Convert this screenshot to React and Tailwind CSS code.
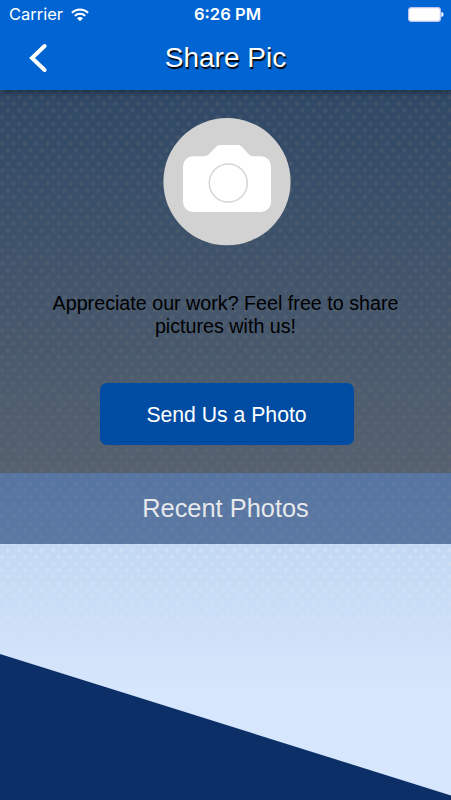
import React from 'react';

function WifiIcon() {
  return (
    <svg width="18" height="14" viewBox="0 0 18 14" fill="none" stroke="#fff" strokeWidth="2">
      <path d="M0.9 4.9 A11.4 11.4 0 0 1 17.1 4.9" />
      <path d="M3.8 7.9 A7.3 7.3 0 0 1 14.2 7.9" />
      <path d="M9 13.2 L6 10.3 A4.2 4.2 0 0 1 12 10.3 Z" fill="#fff" stroke="none" />
    </svg>
  );
}

function BatteryIcon() {
  return (
    <svg width="36" height="15" viewBox="0 0 36 15">
      <rect x="0.6" y="0.6" width="31.8" height="13.8" rx="2.6" fill="#fff" stroke="#b9c4f0" strokeWidth="1.2" />
      <path d="M33.3 5 C36.3 5.4 36.3 9.6 33.3 10 Z" fill="#fff" />
    </svg>
  );
}

function CameraBadge() {
  return (
    <svg width="128" height="128" viewBox="0 0 128 128">
      <circle cx="64" cy="63.7" r="63.6" fill="#d2d2d2" />
      <path
        d="M30 38.3 H40 C43 38.3 44.3 37.5 46 36 L52.5 29.5 C54.5 27.6 55.5 27.1 58 27.1 H74 C76.5 27.1 77.5 27.6 79.5 29.5 L85.5 36 C87 37.5 88 38.3 91 38.3 H98 A10 10 0 0 1 108 48.3 V84 A10 10 0 0 1 98 94 H30 A10 10 0 0 1 20 84 V48.3 A10 10 0 0 1 30 38.3 Z"
        fill="#fff"
      />
      <circle cx="65.3" cy="65" r="19" fill="#fff" stroke="#d6d6d6" strokeWidth="1.5" />
    </svg>
  );
}

function StatusBar() {
  return (
    <div className="grid h-[29px] grid-cols-3 items-center pl-[9px] pr-[7px] font-['Inter',sans-serif] text-[16.5px]">
      <div className="flex items-center gap-2">
        <span>Carrier</span>
        <WifiIcon />
      </div>
      <span className="whitespace-nowrap pl-[2px] text-center text-[16.6px] font-semibold">6:26 PM</span>
      <div className="flex justify-end">
        <BatteryIcon />
      </div>
    </div>
  );
}

export default function App() {
  return (
    <div className="relative isolate flex h-[800px] w-[451px] flex-col overflow-hidden bg-[linear-gradient(to_bottom,#649ada_90px,#bcd3f0_500px,#d6e6fc_690px)] font-['Liberation_Sans',sans-serif]">
      {/* Dotted texture, fades out above the slope */}
      <div className="absolute inset-0 -z-10 bg-[radial-gradient(circle,#ffffff34_1.6px,transparent_2.8px),radial-gradient(circle,#ffffff34_1.6px,transparent_2.8px)] bg-size-[11.33px_13.33px] bg-position-[2.3px_-2.9px,7.97px_3.77px] mask-[linear-gradient(to_bottom,#000_540px,transparent_665px)]" />

      <header className="relative z-10 h-[90px] bg-[#0064d2] text-white shadow-[0_1px_7px_rgba(0,0,0,0.5)]">
        <StatusBar />
        <div className="grid h-[58px] grid-cols-[76px_1fr_76px] items-center">
          <button className="flex justify-center" aria-label="Back">
            <svg width="20" height="30" viewBox="0 0 20 30" fill="none" stroke="#fff" strokeWidth="4" strokeLinecap="round">
              <path d="M16.6 3 L4 15 L16.6 27" />
            </svg>
          </button>
          <h1 className="text-center text-[28px] [text-shadow:1px_2px_1px_#000]">Share Pic</h1>
        </div>
      </header>

      <section className="flex h-[383px] flex-col items-center bg-black/53 pl-[2px] pt-7">
        <CameraBadge />
        <p className="mt-[46px] w-[370px] pr-[2px] text-center text-[19.7px] leading-[23px]">
          Appreciate our work? Feel free to share pictures with us!
        </p>
        <button className="mt-[45px] h-[62px] w-[254px] rounded-[7px] bg-[#004ca3] pt-[2px] text-[21.2px] text-white">
          Send Us a Photo
        </button>
      </section>

      <h2 className="flex h-[71px] items-center justify-center bg-[#00235d]/53 text-[25.4px] text-[#e6e8eb]">
        Recent Photos
      </h2>

      <div className="flex flex-1 items-end">
        <svg width="451" height="146" viewBox="0 0 451 146">
          <path d="M0 0 L451 141.5 V146 H0 Z" fill="#0b2f66" />
        </svg>
      </div>
    </div>
  );
}
